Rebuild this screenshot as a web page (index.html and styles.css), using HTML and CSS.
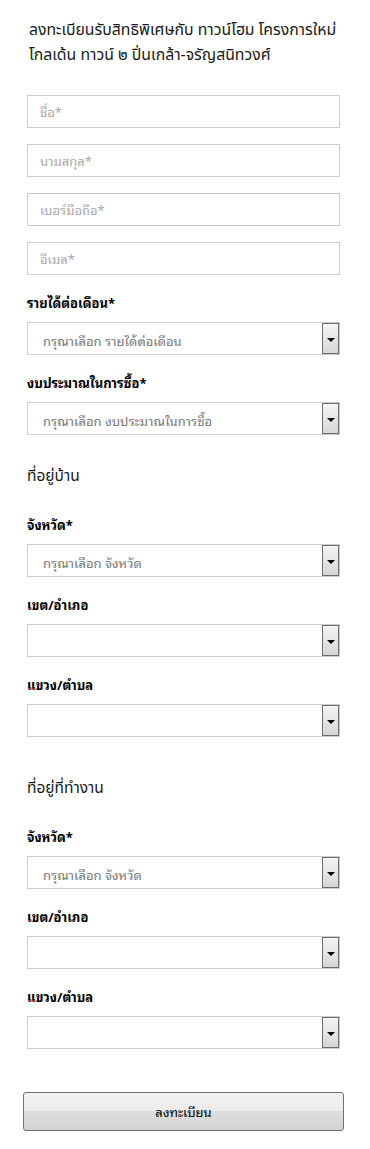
FILE: index.html
```html
<!DOCTYPE html>
<html lang="th">
<head>
<meta charset="UTF-8">
<title>ลงทะเบียนรับสิทธิพิเศษ – ทาวน์โฮม โกลเด้น ทาวน์ ๒</title>
<link rel="stylesheet" href="styles.css">
</head>
<body>
<div class="register">
<h1>ลงทะเบียนรับสิทธิพิเศษกับ ทาวน์โฮม โครงการใหม่ โกลเด้น ทาวน์ ๒ ปิ่นเกล้า-จรัญสนิทวงศ์</h1>

<form class="reg-form" onsubmit="return false">
<input class="field" type="text" placeholder="ชื่อ*">
<input class="field" type="text" placeholder="นามสกุล*">
<input class="field" type="tel" placeholder="เบอร์มือถือ*">
<input class="field" type="email" placeholder="อีเมล*">

<label class="lbl">รายได้ต่อเดือน*</label>
<div class="select-box">
<select><option>กรุณาเลือก รายได้ต่อเดือน</option></select>
<span class="arrow"></span>
</div>

<label class="lbl">งบประมาณในการซื้อ*</label>
<div class="select-box">
<select><option>กรุณาเลือก งบประมาณในการซื้อ</option></select>
<span class="arrow"></span>
</div>

<div class="address home">
<h2>ที่อยู่บ้าน</h2>
<label class="lbl">จังหวัด*</label>
<div class="select-box">
<select><option>กรุณาเลือก จังหวัด</option></select>
<span class="arrow"></span>
</div>
<label class="lbl">เขต/อำเภอ</label>
<div class="select-box">
<select><option></option></select>
<span class="arrow"></span>
</div>
<label class="lbl">แขวง/ตำบล</label>
<div class="select-box">
<select><option></option></select>
<span class="arrow"></span>
</div>
</div>

<div class="address work">
<h2>ที่อยู่ที่ทำงาน</h2>
<label class="lbl">จังหวัด*</label>
<div class="select-box">
<select><option>กรุณาเลือก จังหวัด</option></select>
<span class="arrow"></span>
</div>
<label class="lbl">เขต/อำเภอ</label>
<div class="select-box">
<select><option></option></select>
<span class="arrow"></span>
</div>
<label class="lbl">แขวง/ตำบล</label>
<div class="select-box">
<select><option></option></select>
<span class="arrow"></span>
</div>
</div>

<button class="submit" type="submit">ลงทะเบียน</button>
</form>
</div>
</body>
</html>
```

FILE: styles.css
```css
body { margin:0; background:#fff; color:#000; font-family:'Tahoma', 'Noto Sans Thai Looped', 'Noto Sans Thai', 'Liberation Sans', sans-serif; font-size:13px; }
.register { padding:18px 30px 20px 27px; }
h1 { margin:0 0 27px 2px; font-family:'Noto Sans Thai', 'Liberation Sans', sans-serif; font-weight:normal; font-size:15.8px; line-height:25px; color:#1a1a1a; }
.reg-form, .address { display:flex; flex-direction:column; }
.field { box-sizing:border-box; height:33px; margin:0 0 16px; padding:0 12px; border:1px solid #cbcbcb; font:inherit; font-size:13px; color:#333; }
.field::placeholder { color:#a8a8a8; }
.lbl { display:block; margin:2px 0 9px; line-height:20px; font-weight:bold; font-size:13px; }
.select-box { display:flex; height:33px; box-sizing:border-box; border:1px solid #cbcbcb; background:#fff; margin-bottom:16px; }
.select-box select { flex:1; min-width:0; appearance:none; -webkit-appearance:none; border:none; outline:none; background:transparent; padding:4px 0 0 15px; font:inherit; font-size:13px; color:#777; }
.arrow { width:15px; border:1px solid #6e6e6e; background:linear-gradient(#f4f4f4, #e8e8e8 45%, #d6d6d6); display:flex; align-items:center; justify-content:center; }
.arrow::after { content:''; border-left:4px solid transparent; border-right:4px solid transparent; border-top:4px solid #000; margin-top:2px; }
.address h2 { margin:0 0 24px; font-family:'Noto Sans Thai', 'Liberation Sans', sans-serif; font-weight:normal; font-size:15.5px; line-height:24px; color:#1a1a1a; }
.address.home { margin-top:14px; }
.address.work { margin-top:24px; }
.submit { margin:27px -4px 0; height:39px; border:1px solid #707070; border-radius:3px; background:linear-gradient(#f2f2f2 0%, #ebebeb 49%, #dddddd 50%, #d4d4d4 100%); font:inherit; font-size:13px; font-weight:normal; color:#000; cursor:pointer; }
```
